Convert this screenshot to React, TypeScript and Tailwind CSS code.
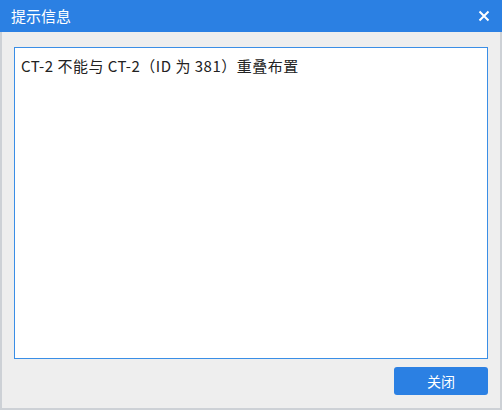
const App = () => {
  return (
    <div
      className="w-[502px] h-[410px] flex flex-col bg-[#eeeeee] border-x-2 border-b-2 border-[#cdd1d6]"
      style={{ fontFamily: '"Microsoft YaHei", "Noto Sans CJK SC", "Liberation Sans", sans-serif' }}
    >
      <div className="h-[32px] -mx-[2px] bg-[#2b80e3] flex items-center justify-between pl-[11px] pr-[12px]">
        <span className="text-white text-[15px]">提示信息</span>
        <svg width="12" height="12" viewBox="0 0 12 12">
          <path d="M1.5 1.5 L10.5 10.5 M10.5 1.5 L1.5 10.5" stroke="white" strokeWidth="2" />
        </svg>
      </div>
      <div className="flex-1 flex flex-col px-[12px] pt-[15px] pb-[12px]">
        <div className="h-[312px] bg-white border border-[#3a8ee6] px-[6px] py-[8px]">
          <p className="text-[15px] text-[#222222] leading-[20px] tracking-[0.5px]">
            CT-2 不能与 CT-2（ID 为 381）重叠布置
          </p>
        </div>
        <div className="flex justify-end mt-[8px]">
          <button className="w-[94px] h-[28px] rounded-[3px] bg-[#2b80e3] text-white text-[14px]">
            关闭
          </button>
        </div>
      </div>
    </div>
  );
};

export default App;
